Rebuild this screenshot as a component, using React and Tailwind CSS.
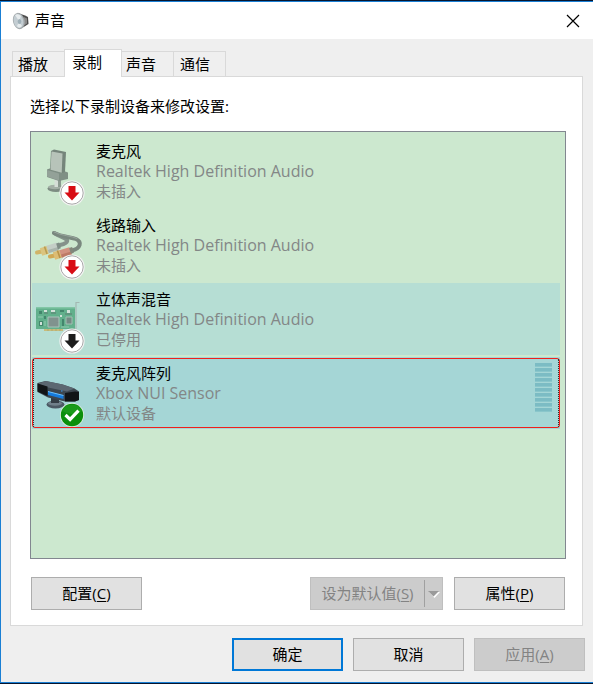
import { useState } from "react";

function Badge({ kind }) {
  if (kind === "check") {
    return (
      <g>
        <circle cx="40" cy="58" r="12" fill="#e4f0e4" />
        <circle cx="40" cy="58" r="11.2" fill="#0b8f0b" />
        <path d="M30 54a11 11 0 0 1 20 0q-10 6-20 0z" fill="#2aa52a" opacity="0.5" />
        <path d="M33.5 58l4.6 4.4 8.400-8.800" fill="none" stroke="#fff" strokeWidth="3.200" />
      </g>
    );
  }
  const arrow = kind === "unplugged" ? "#d80c14" : "#1c1c1c";
  return (
    <g>
      <circle cx="40" cy="58" r="12.6" fill="#f4f4f4" />
      <circle cx="40" cy="58" r="11.2" fill="#fff" stroke="#a8a8a8" strokeWidth="1" />
      <path d="M36.500 51h7v6.500h4l-7.500 8-7.500-8h4z" fill={arrow} />
    </g>
  );
}

function MicrophoneArt() {
  return (
    <g>
      <ellipse cx="24" cy="53.5" rx="8.500" ry="3.6" fill="#7d8c82" />
      <ellipse cx="23" cy="52" rx="7" ry="2.200" fill="#a3b0a6" />
      <path d="M22.500 43h6v9h-6z" fill="#d5ded7" />
      <path d="M26 43h3v9h-3z" fill="#8b9a90" />
      <path d="M15 34.500l4-1.500 14 3.500 3 1v6.500l-9 2-12-4z" fill="#7f8f85" />
      <path d="M15 35l12 3.500v7l-12-4z" fill="#93a198" />
      <path d="M19 16l3-1.500 12 2.500-1 20-2.500 1-12.500-3z" fill="#75857b" />
      <path d="M19.500 16.500l11 2-.8 19.200-11.200-3z" fill="#b7c3b9" />
    </g>
  );
}

function LineInArt() {
  return (
    <g fill="none" strokeLinecap="round">
      <path d="M22 24c7 4 11 5 13 7 1 2-2 4-7 5" stroke="#84928a" strokeWidth="4" />
      <path d="M22 24c8 4 17 4 22 6 6 3 5 9-4 11.500" stroke="#7a887f" strokeWidth="4" />
      <path d="M22 23c8 4 17 3.500 23 6.500" stroke="#98a59d" strokeWidth="1" />
      <path d="M5 43.500l5-1" stroke="#d0b468" strokeWidth="4" />
      <path d="M9 43l7-2.200" stroke="#dac480" strokeWidth="8" strokeLinecap="butt" />
      <path d="M13 41.500l1.500-.500" stroke="#b99c50" strokeWidth="8" strokeLinecap="butt" />
      <path d="M15.500 40.500l10-3" stroke="#c4cec6" strokeWidth="8" strokeLinecap="butt" />
      <path d="M16.500 42.500l10-3" stroke="#a9b5ac" strokeWidth="3" strokeLinecap="butt" />
      <path d="M25 37.300l3-.9" stroke="#7f8d85" strokeWidth="6" strokeLinecap="butt" />
      <path d="M18 47.500l5-1" stroke="#d0a855" strokeWidth="4" />
      <path d="M22 47l7-2.200" stroke="#dcbd75" strokeWidth="8" strokeLinecap="butt" />
      <path d="M26 45.500l1.500-.500" stroke="#b99248" strokeWidth="8" strokeLinecap="butt" />
      <path d="M28.500 45l10-3" stroke="#d29280" strokeWidth="8" strokeLinecap="butt" />
      <path d="M29.500 47l10-3" stroke="#bd7a66" strokeWidth="3" strokeLinecap="butt" />
      <path d="M38 41.800l3-.9" stroke="#83877b" strokeWidth="6" strokeLinecap="butt" />
    </g>
  );
}

function SoundCardArt() {
  return (
    <g>
      <path d="M47.500 19.500h-3.500v27" fill="none" stroke="#a3b8b2" strokeWidth="1.200" />
      <path d="M4 24h39v22H4z" fill="#62b08c" />
      <path d="M4 24h39v1.500H4z" fill="#82c6a6" />
      <path d="M12 46h19v2H12z" fill="#c7bc7c" />
      <path d="M16 46v2M20 46v2M24 46v2M28 46v2" stroke="#a39c68" strokeWidth="0.6" />
      <path d="M16 34h11v10H16z" fill="#80938e" stroke="#a9c4ba" />
      <path d="M34 34h6v7h-6z" fill="#748a84" stroke="#a1bfb2" />
      <g fill="#43866c">
        <path d="M7 28h3v3H7zM28 27h4v2h-4zM7 38h4v5H7zM30 36h2v7h-2zM12 33h2v3h-2z" />
      </g>
      <g fill="#d2e2da">
        <path d="M12 27h3v2h-3zM19 27h4v2h-4zM35 27h3v3h-3zM28 32h2v2h-2zM8 39h2v3H8z" />
      </g>
      <path d="M12 30h4M19 30h5M33 31h7" stroke="#5e7c71" />
      <path d="M6 34h5M29 44h8M13 38v5" stroke="#9ed2b9" strokeWidth="0.8" />
    </g>
  );
}

function SensorArt() {
  return (
    <g>
      <ellipse cx="23.500" cy="47.500" rx="9" ry="4" fill="#4c5964" />
      <ellipse cx="23" cy="46.500" rx="7" ry="2.200" fill="#71808b" />
      <path d="M19 38h8v8h-8z" fill="#343d45" />
      <path d="M5.500 26l8-2 17 3.500 12 4 4.500 3v8.500l-4 1.500h-10l-17-4-10.500-5.500z" fill="#3c464f" />
      <path d="M6 26.500l8-2.500 17 3.500 11.500 4-7.500 3-19-4z" fill="#5c6771" />
      <path d="M5.500 26.500l10 3v9.500l-10-4.500z" fill="#111417" />
      <path d="M33 36l10-1.500 4 .500v8l-4 1.500h-10z" fill="#111417" />
      <path d="M16 34.500l15.500 4v3.500L16 38z" fill="#157bdc" />
      <path d="M16 34.500l15.500 4" stroke="#6cc2ff" strokeWidth="1" />
      <path d="M29 34h1.500" stroke="#3ea0f0" strokeWidth="1.200" />
    </g>
  );
}

const DEVICES = [
  { name: "麦克风", driver: "Realtek High Definition Audio", status: "未插入", badge: "unplugged", Art: MicrophoneArt },
  { name: "线路输入", driver: "Realtek High Definition Audio", status: "未插入", badge: "unplugged", Art: LineInArt },
  { name: "立体声混音", driver: "Realtek High Definition Audio", status: "已停用", badge: "disabled", Art: SoundCardArt },
  { name: "麦克风阵列", driver: "Xbox NUI Sensor", status: "默认设备", badge: "check", Art: SensorArt, meter: true },
];

function LevelMeter() {
  return (
    <span className="ml-auto mr-2 flex flex-col gap-px pt-1.5" aria-hidden="true">
      {Array.from({ length: 10 }, (_, i) => (
        <span key={i} className="h-1 w-[17px] border-b border-[#8ac6cb] bg-[#7cbcc4]" />
      ))}
    </span>
  );
}

function Device({ device, tone, onSelect }) {
  const { name, driver, status, badge, Art, meter } = device;
  const bg = tone === "selected" ? "bg-[#a5d6d6]" : tone === "hover" ? "bg-[#b6ded4]" : "";
  return (
    <li>
      <button
        type="button"
        aria-pressed={tone === "selected"}
        onClick={onSelect}
        className={`relative flex h-[72px] w-full gap-2 text-left ${bg}`}
      >
        <svg viewBox="0 0 56 72" className="h-[72px] w-14 shrink-0" aria-hidden="true">
          <Art />
          <Badge kind={badge} />
        </svg>
        <span className="flex flex-col pt-1.5">
          <span className="text-black">{name}</span>
          <span className="text-[16px] leading-5 text-[#838787]">{driver}</span>
          <span className="text-[#838787]">{status}</span>
        </span>
        {meter && <LevelMeter />}
        {tone === "selected" && (
          <span className="pointer-events-none absolute inset-x-0 inset-y-px rounded-[3px] border border-[#f0201c]">
            <span className="absolute inset-0 border-x border-dotted border-[#303030]" />
          </span>
        )}
      </button>
    </li>
  );
}

function PushButton({ children, look = "normal", ...rest }) {
  const looks = {
    normal: "border border-[#adadad] bg-[#e1e1e1] text-black",
    primary: "border-2 border-[#0078d7] bg-[#e1e1e1] text-black",
    disabled: "border border-[#bfbfbf] bg-[#cccccc] text-[#838383]",
  };
  return (
    <button
      type="button"
      disabled={look === "disabled"}
      className={`flex h-[33px] w-[111px] items-center justify-center pb-0.5 ${looks[look]}`}
      {...rest}
    >
      {children}
    </button>
  );
}

function Key({ children }) {
  return <span className="underline underline-offset-2">{children}</span>;
}

const TABS = [
  { label: "播放", style: "h-[25px] w-[52px] border-t border-l pl-[5px]" },
  { label: "录制", style: "relative -mb-px h-7 w-[58px] border-x border-t bg-white pb-1 pl-[7px]" },
  { label: "声音", style: "h-[25px] w-[52px] border-t border-r pl-1" },
  { label: "通信", style: "h-[25px] w-[52px] border-t border-r pl-1.5" },
];

export default function App() {
  const [selected, setSelected] = useState(3);
  return (
    <div className="flex min-h-screen flex-col border-y border-[#06152e] bg-[#efefef] font-['Open_Sans','Noto_Sans_CJK_SC',sans-serif] text-[15px] leading-5 text-black">
      <div className="flex grow flex-col border-y border-l border-[#1a7fd4]">
        <header className="flex h-[37px] items-center bg-white pr-3 pl-[11px]">
          <svg viewBox="0 0 18 18" className="size-[18px]" aria-hidden="true">
            <path d="M6 1l7 2.500 3 1.500.500 7-4 2.500L8 17z" fill="#4c4c4c" />
            <path d="M12 5l3 1.500v5l-3 2z" fill="#8a8a8a" />
            <ellipse cx="6.800" cy="9" rx="5.800" ry="8.300" fill="#a5abae" transform="rotate(-12 6.800 9)" />
            <ellipse cx="6.500" cy="9" rx="4.800" ry="7.200" fill="#c3cdd2" transform="rotate(-12 6.500 9)" />
            <path d="M7 9L3 3q3-2 6 1zM7 10l3 4q-3 3-5 0z" fill="#e6ebed" />
            <ellipse cx="7.500" cy="9.500" rx="1.800" ry="2.600" fill="#9fb0b8" />
          </svg>
          <h1 className="ml-[5px] pb-px">声音</h1>
          <button type="button" aria-label="关闭" className="ml-auto p-px">
            <svg viewBox="0 0 14 14" className="size-3.5" fill="none" stroke="#000" strokeWidth="1.200">
              <path d="M1 1l12 12M13 1L1 13" />
            </svg>
          </button>
        </header>

        <main className="mr-2.5 ml-[9px] mt-2.5">
          <div role="tablist" className="flex items-end pl-0.5">
            {TABS.map(({ label, style }, i) => (
              <button
                key={label}
                type="button"
                role="tab"
                aria-selected={i === 1}
                className={`flex items-center border-[#d9d9d9] ${style}`}
              >
                {label}
              </button>
            ))}
          </div>

          <section className="border border-[#d9d9d9] bg-white pt-[19px] pr-4 pb-[15px] pl-[19px]">
            <p>选择以下录制设备来修改设置:</p>
            <ul className="mt-[15px] flex min-h-[428px] flex-col gap-0.5 border border-[#828790] bg-[#cce8cf] pt-[3px] pr-[5px] pl-px">
              {DEVICES.map((device, i) => (
                <Device
                  key={device.name}
                  device={device}
                  tone={i === selected ? "selected" : i === 2 ? "hover" : "plain"}
                  onSelect={() => setSelected(i)}
                />
              ))}
            </ul>

            <div className="mt-[18px] flex items-center gap-[11px] pr-px pl-px">
              <PushButton>
                <span>配置(<Key>C</Key>)</span>
              </PushButton>
              <div className="ml-auto flex h-[33px] w-[133px] border border-[#bfbfbf] bg-[#cccccc] text-[#838383]">
                <button type="button" disabled className="grow pb-0.5">
                  设为默认值(<Key>S</Key>)
                </button>
                <button
                  type="button"
                  disabled
                  aria-label="更多选项"
                  className="my-0.5 flex w-[18px] items-center justify-center border-l border-[#a0a0a0]"
                >
                  <svg viewBox="0 0 12 8" className="h-2 w-3" aria-hidden="true">
                    <path d="M1 2h11L6.500 8z" fill="#fff" />
                    <path d="M0 1h11L5.500 6.500z" fill="#9a9a9a" />
                  </svg>
                </button>
              </div>
              <PushButton>
                <span>属性(<Key>P</Key>)</span>
              </PushButton>
            </div>
          </section>
        </main>

        <footer className="mt-3 flex justify-end gap-2.5 pr-2 pb-[11px]">
          <PushButton look="primary">确定</PushButton>
          <PushButton>取消</PushButton>
          <PushButton look="disabled">
            <span>应用(<Key>A</Key>)</span>
          </PushButton>
        </footer>
      </div>
    </div>
  );
}
